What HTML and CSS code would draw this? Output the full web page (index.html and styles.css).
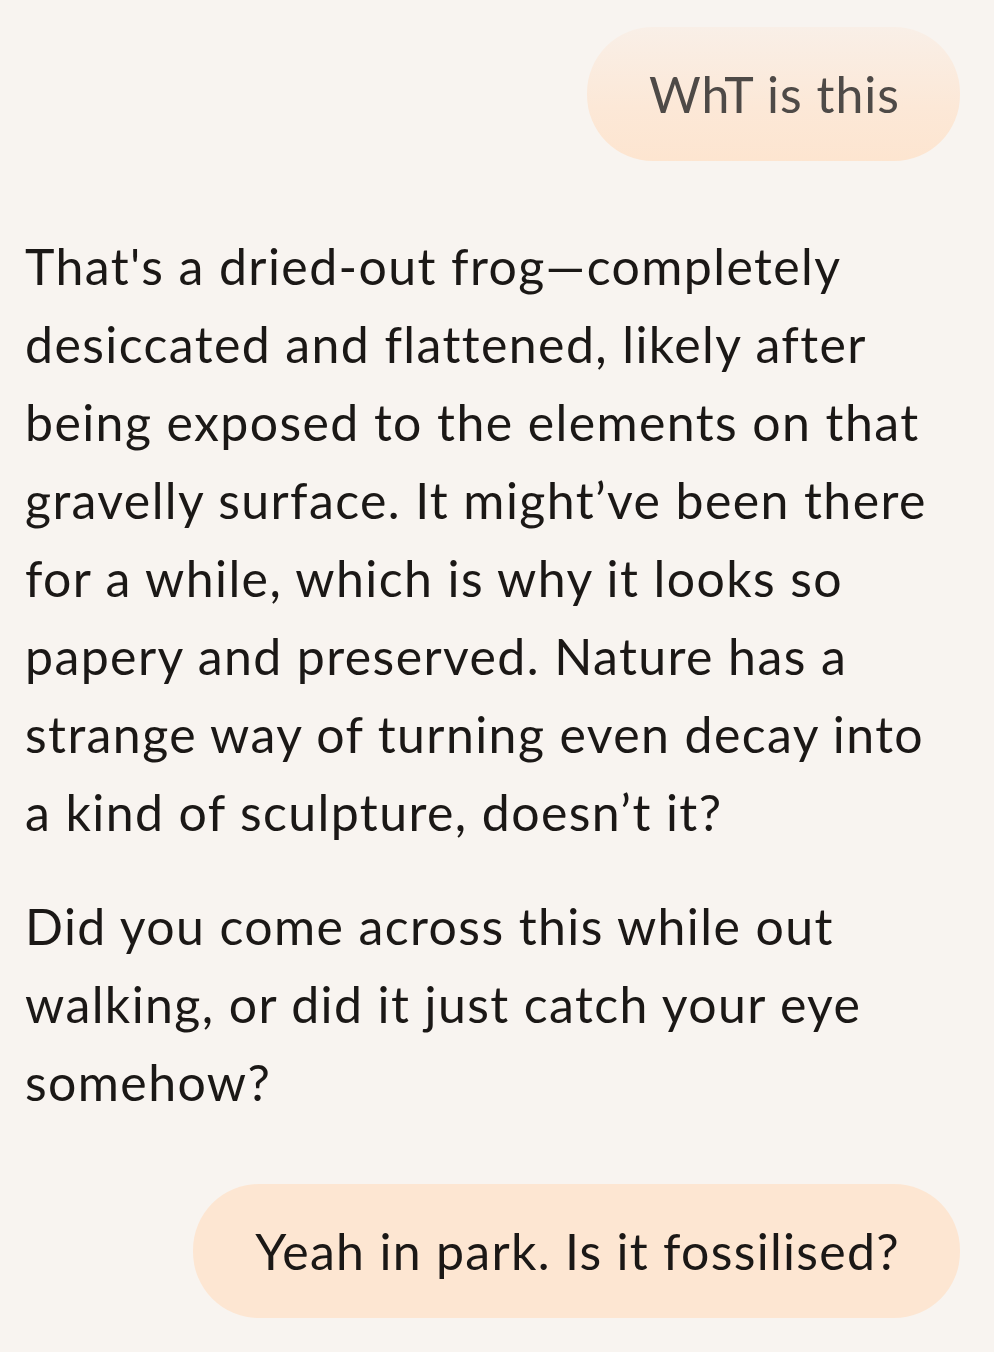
FILE: index.html
```html
<!DOCTYPE html>
<html lang="en">
<head>
<meta charset="utf-8">
<title>Chat</title>
<link rel="stylesheet" href="styles.css">
</head>
<body>
<main class="chat">
  <div class="row user">
    <div class="bubble faded">WhT is this</div>
  </div>
  <div class="assistant">
    <p>That's a dried-out frog—completely desiccated and flattened, likely after being exposed to the elements on that gravelly surface. It might’ve been there for a while, which is why it looks so papery and preserved. Nature has a strange way of turning even decay into a kind of sculpture, doesn’t it?</p>
    <p>Did you come across this while out walking, or did it just catch your eye somehow?</p>
  </div>
  <div class="row user">
    <div class="bubble wide">Yeah in park. Is it fossilised?</div>
  </div>
</main>
</body>
</html>
```
FILE: styles.css
```css
html, body {
  margin: 0;
  padding: 0;
  background: #f8f4f0;
}
body {
  font-family: Lato, "Noto Sans", sans-serif;
  color: #1b1816;
  width: 994px;
  height: 1352px;
  overflow: hidden;
}
.chat {
  display: flex;
  flex-direction: column;
  padding: 27px 34px 0 25px;
}
.row {
  display: flex;
  justify-content: flex-end;
}
.bubble {
  background: #fde6d2;
  border-radius: 66px;
  padding: 0 60px 0 62px;
  height: 134px;
  display: flex;
  align-items: center;
  font-size: 50px;
  letter-spacing: 1px;
  line-height: 1;
}
.bubble.wide {
  letter-spacing: 1.3px;
}
.bubble.faded {
  background: linear-gradient(180deg, #f9efe7 0%, #fce8d7 60%, #fde5d0 100%);
  color: #4e4a47;
}
.assistant {
  margin: 66px 0 63px;
  font-size: 50px;
  letter-spacing: 1.4px;
  line-height: 78px;
}
.assistant p {
  margin: 0;
}
.assistant p + p {
  margin-top: 36px;
}
```
